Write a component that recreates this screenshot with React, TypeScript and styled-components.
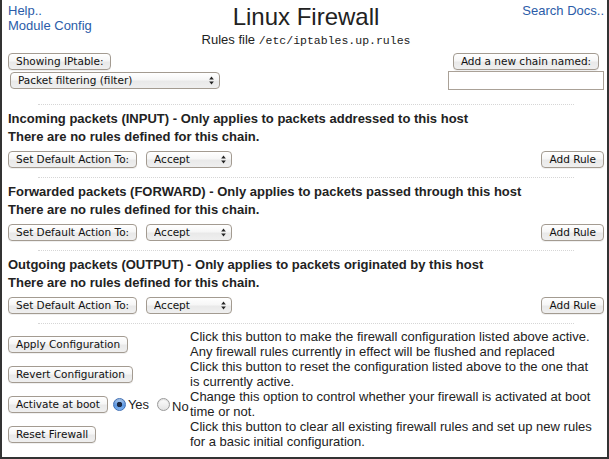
import React from "react";
import styled, { createGlobalStyle } from "styled-components";

const Global = createGlobalStyle`
  html, body { margin: 0; padding: 0; background: #fff; }
  body { font-family: "Liberation Sans", Arial, Helvetica, sans-serif; color: #222; }
  * { box-sizing: border-box; }
`;

const Page = styled.div`
  width: 609px;
  height: 459px;
  border: 2px solid #333;
  border-top: none;
  padding: 3px 3px 0 6px;
  overflow: hidden;
`;

const Header = styled.div`
  display: grid;
  grid-template-columns: 1fr auto 1fr;
  align-items: start;
`;

const LinkCol = styled.div<{ $right?: boolean }>`
  display: flex;
  flex-direction: column;
  align-items: ${(p) => (p.$right ? "flex-end" : "flex-start")};
  font-size: 13px;
  line-height: 15px;
`;

const Link = styled.a`
  color: #2b5ca8;
  text-decoration: none;
`;

const TitleCol = styled.div`
  display: flex;
  flex-direction: column;
  align-items: center;
`;

const Title = styled.h1`
  margin: 0;
  font-size: 24px;
  font-weight: normal;
  line-height: 28px;
  color: #222;
`;

const RulesLine = styled.div`
  font-size: 13px;
  line-height: 15px;
  margin-top: 1px;
`;

const Mono = styled.code`
  font-family: "Liberation Mono", "Courier New", monospace;
  font-size: 11.5px;
`;

const ControlsRow = styled.div`
  display: flex;
  justify-content: space-between;
  align-items: flex-start;
  margin-top: 5px;
`;

const StackCol = styled.div<{ $center?: boolean }>`
  display: flex;
  flex-direction: column;
  align-items: ${(p) => (p.$center ? "center" : "flex-start")};
`;

const Button = styled.button`
  display: block;
  font-family: "DejaVu Sans", "Lucida Grande", sans-serif;
  font-size: 10.5px;
  height: 17px;
  line-height: 15px;
  padding: 0 7px;
  margin: 0;
  border: 1px solid #a39b91;
  border-radius: 4px;
  color: #111;
  white-space: nowrap;
  background: linear-gradient(#ffffff 0%, #f6f6f6 45%, #e9e9e9 55%, #efefef 100%);
  box-shadow: 0 1px 0 rgba(0, 0, 0, 0.06);
`;

const SelectWrap = styled.span<{ $w: number; $ml?: number; $mt?: number }>`
  position: relative;
  display: block;
  width: ${(p) => p.$w}px;
  height: 17px;
  margin-left: ${(p) => p.$ml ?? 0}px;
  margin-top: ${(p) => p.$mt ?? 0}px;
`;

const Select = styled.select`
  appearance: none;
  -webkit-appearance: none;
  display: block;
  width: 100%;
  height: 17px;
  margin: 0;
  padding: 0 0 0 7px;
  font-family: "DejaVu Sans", "Lucida Grande", sans-serif;
  font-size: 10.5px;
  line-height: 15px;
  color: #111;
  border: 1px solid #a39b91;
  border-radius: 4px;
  background: linear-gradient(#ffffff 0%, #f6f6f6 45%, #e9e9e9 55%, #efefef 100%);
`;

const Arrows = styled.svg`
  position: absolute;
  right: 6px;
  top: 4px;
  pointer-events: none;
`;

const TextInput = styled.input`
  display: block;
  width: 156px;
  height: 19px;
  margin: 1px 0 0 0;
  border: 1px solid #aaa197;
  background: #fff;
  padding: 0 3px;
`;

const Rule = styled.hr<{ $mt: number }>`
  width: 90%;
  margin: ${(p) => p.$mt}px auto 0;
  border: none;
  border-top: 1px dotted #d6d6d6;
  height: 0;
`;

const Section = styled.section`
  margin-top: 5px;
`;

const BoldLine = styled.div`
  font-size: 13px;
  font-weight: bold;
  line-height: 18px;
  color: #222;
`;

const ActionRow = styled.div`
  display: flex;
  align-items: center;
  gap: 9px;
  margin-top: 5px;
  height: 17px;
`;

const Push = styled.div`
  display: flex;
  margin-left: auto;
`;

const BottomGrid = styled.div`
  display: grid;
  grid-template-columns: 182px 1fr;
  grid-auto-rows: 30px;
  align-items: center;
  margin-top: 5px;
`;

const CellLeft = styled.div`
  display: flex;
  align-items: center;
  white-space: nowrap;
  height: 100%;
  padding-top: 1px;
`;

const Desc = styled.div`
  font-size: 13px;
  line-height: 15px;
  color: #222;
  white-space: nowrap;
  align-self: start;
`;

const Radio = styled.span<{ $on?: boolean }>`
  display: inline-block;
  width: 13px;
  height: 13px;
  border-radius: 50%;
  margin-left: ${(p) => (p.$on ? 5 : 8)}px;
  margin-right: 2px;
  border: 1px solid ${(p) => (p.$on ? "#3f6fb5" : "#9a9a9a")};
  background: ${(p) =>
    p.$on
      ? "radial-gradient(circle at 50% 50%, #1d2c48 0 2.5px, transparent 3px), linear-gradient(#b7d3f5, #5c97e2 55%, #7fb3f0)"
      : "linear-gradient(#fdfdfd, #e3e3e3)"};
  box-shadow: inset 0 1px 1px rgba(0, 0, 0, 0.12);
`;

const RadioLabel = styled.span<{ $low?: boolean }>`
  font-size: 13px;
  line-height: 15px;
  position: relative;
  top: ${(p) => (p.$low ? 2 : 0)}px;
`;

function UpDown() {
  return (
    <Arrows width="5" height="9" viewBox="0 0 5 9">
      <path d="M2.5 0.5 L4.8 3.5 L0.2 3.5 Z" fill="#222" />
      <path d="M2.5 8.5 L4.8 5.5 L0.2 5.5 Z" fill="#222" />
    </Arrows>
  );
}

function PlainSelect({ w, value, ml, mt }: { w: number; value: string; ml?: number; mt?: number }) {
  return (
    <SelectWrap $w={w} $ml={ml} $mt={mt}>
      <Select defaultValue={value}>
        <option>{value}</option>
      </Select>
      <UpDown />
    </SelectWrap>
  );
}

const chains = [
  "Incoming packets (INPUT) - Only applies to packets addressed to this host",
  "Forwarded packets (FORWARD) - Only applies to packets passed through this host",
  "Outgoing packets (OUTPUT) - Only applies to packets originated by this host",
];

export default function App() {
  return (
    <>
      <Global />
      <Page>
        <Header>
          <LinkCol>
            <Link href="#">Help..</Link>
            <Link href="#">Module Config</Link>
          </LinkCol>
          <TitleCol>
            <Title>Linux Firewall</Title>
            <RulesLine>
              Rules file <Mono>/etc/iptables.up.rules</Mono>
            </RulesLine>
          </TitleCol>
          <LinkCol $right>
            <Link href="#">Search Docs..</Link>
          </LinkCol>
        </Header>

        <ControlsRow>
          <StackCol>
            <Button>Showing IPtable:</Button>
            <PlainSelect w={210} value="Packet filtering (filter)" ml={2} mt={2} />
          </StackCol>
          <StackCol $center>
            <Button>Add a new chain named:</Button>
            <TextInput type="text" />
          </StackCol>
        </ControlsRow>

        <Rule $mt={14} />

        {chains.map((c) => (
          <React.Fragment key={c}>
            <Section>
              <BoldLine>{c}</BoldLine>
              <BoldLine>There are no rules defined for this chain.</BoldLine>
              <ActionRow>
                <Button>Set Default Action To:</Button>
                <PlainSelect w={86} value="Accept" />
                <Push>
                  <Button>Add Rule</Button>
                </Push>
              </ActionRow>
            </Section>
            <Rule $mt={9} />
          </React.Fragment>
        ))}

        <BottomGrid>
          <CellLeft>
            <Button>Apply Configuration</Button>
          </CellLeft>
          <Desc>
            Click this button to make the firewall configuration listed above active.
            <br />
            Any firewall rules currently in effect will be flushed and replaced
          </Desc>
          <CellLeft>
            <Button>Revert Configuration</Button>
          </CellLeft>
          <Desc>
            Click this button to reset the configuration listed above to the one that
            <br />
            is currently active.
          </Desc>
          <CellLeft>
            <Button>Activate at boot</Button>
            <Radio $on />
            <RadioLabel>Yes</RadioLabel>
            <Radio />
            <RadioLabel $low>No</RadioLabel>
          </CellLeft>
          <Desc>
            Change this option to control whether your firewall is activated at boot
            <br />
            time or not.
          </Desc>
          <CellLeft>
            <Button>Reset Firewall</Button>
          </CellLeft>
          <Desc>
            Click this button to clear all existing firewall rules and set up new rules
            <br />
            for a basic initial configuration.
          </Desc>
        </BottomGrid>
      </Page>
    </>
  );
}
